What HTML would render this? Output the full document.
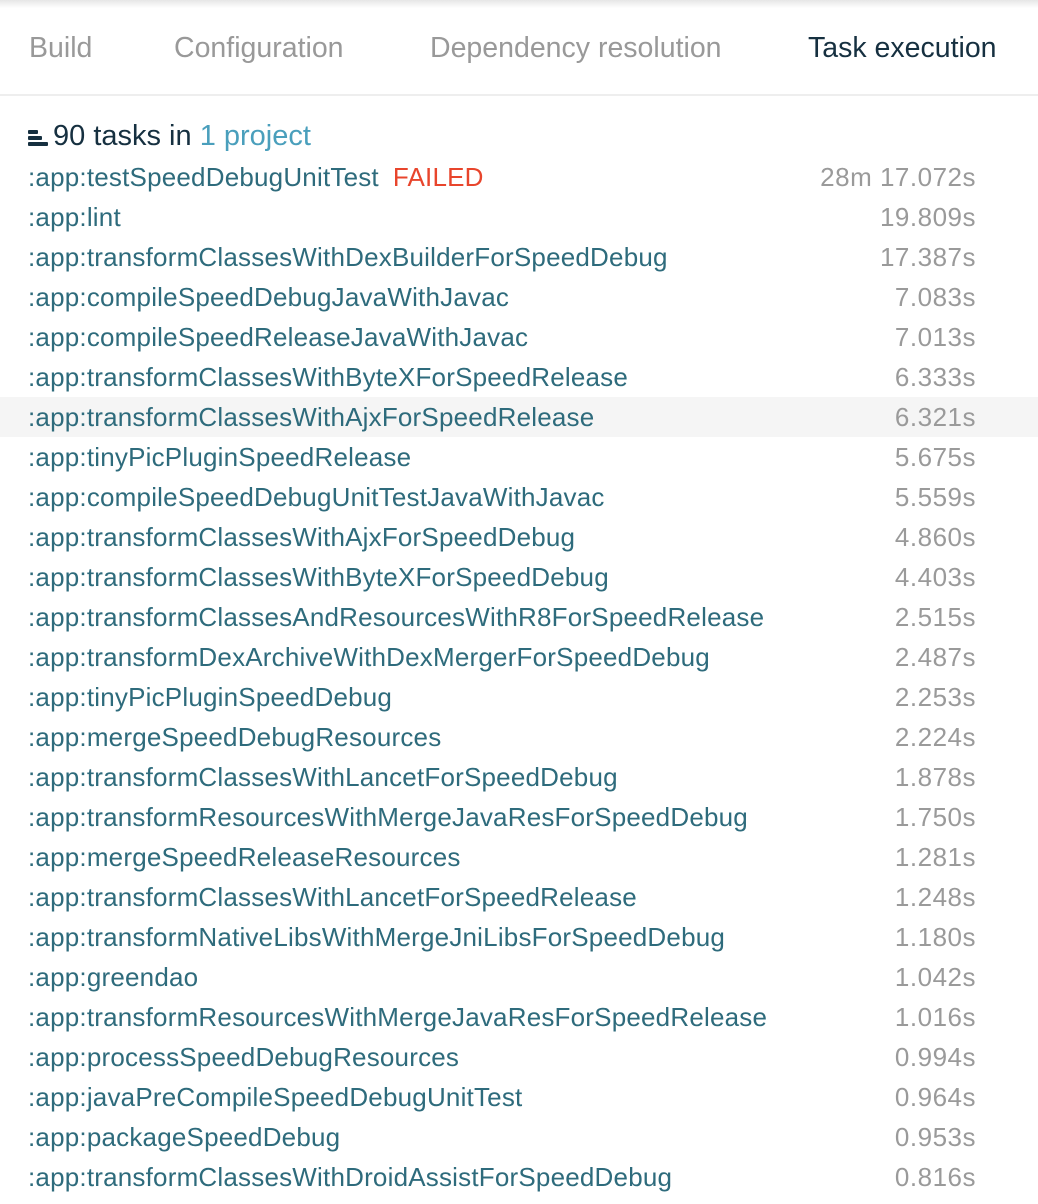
<!DOCTYPE html>
<html><head><meta charset="utf-8"><style>
*{margin:0;padding:0;box-sizing:border-box}
body{width:1038px;height:1204px;background:#fff;font-family:"Liberation Sans",sans-serif;position:relative;overflow:hidden}
.shadow{position:absolute;top:0;left:0;right:0;height:8px;background:linear-gradient(#e6e6e6,#fff)}
.tab{position:absolute;top:30px;font-size:28.5px;color:#999;white-space:nowrap;line-height:36px}
.div{position:absolute;top:94px;left:0;right:0;height:2px;background:#eeeeee}
.hdr{position:absolute;top:119px;left:28px;font-size:29px;color:#163040;line-height:34px;white-space:nowrap}
.hdr a{color:#4a9fbc;text-decoration:none}
.ic{display:inline-block;width:20px;height:18px;position:relative;vertical-align:-1px;margin-right:5px}
.ic i{position:absolute;left:0;height:3.5px;background:#163040;border-radius:1px}
.row{position:absolute;left:0;right:0;height:40px;line-height:40px;font-size:26px;white-space:nowrap;letter-spacing:0.2px}
.row .n{position:absolute;left:28px;color:#2e6b7c}
.row .t{position:absolute;right:62px;color:#9a9a9a;letter-spacing:0.5px}
.f{color:#e8452c;margin-left:14px}
.hl{background:#f5f5f5}
</style></head><body>
<div class="shadow"></div>
<div class="tab" style="left:29px">Build</div>
<div class="tab" style="left:174px">Configuration</div>
<div class="tab" style="left:430px">Dependency resolution</div>
<div class="tab" style="left:808px;color:#163040">Task execution</div>
<div class="div"></div>
<div class="hdr"><span class="ic"><i style="top:2px;width:10px"></i><i style="top:8px;width:14px"></i><i style="top:14px;width:20px"></i></span>90 tasks in <a>1 project</a></div>
<div class="row" style="top:157px"><span class="n">:app:testSpeedDebugUnitTest<span class="f">FAILED</span></span><span class="t">28m 17.072s</span></div>
<div class="row" style="top:197px"><span class="n">:app:lint</span><span class="t">19.809s</span></div>
<div class="row" style="top:237px"><span class="n">:app:transformClassesWithDexBuilderForSpeedDebug</span><span class="t">17.387s</span></div>
<div class="row" style="top:277px"><span class="n">:app:compileSpeedDebugJavaWithJavac</span><span class="t">7.083s</span></div>
<div class="row" style="top:317px"><span class="n">:app:compileSpeedReleaseJavaWithJavac</span><span class="t">7.013s</span></div>
<div class="row" style="top:357px"><span class="n">:app:transformClassesWithByteXForSpeedRelease</span><span class="t">6.333s</span></div>
<div class="row hl" style="top:397px"><span class="n">:app:transformClassesWithAjxForSpeedRelease</span><span class="t">6.321s</span></div>
<div class="row" style="top:437px"><span class="n">:app:tinyPicPluginSpeedRelease</span><span class="t">5.675s</span></div>
<div class="row" style="top:477px"><span class="n">:app:compileSpeedDebugUnitTestJavaWithJavac</span><span class="t">5.559s</span></div>
<div class="row" style="top:517px"><span class="n">:app:transformClassesWithAjxForSpeedDebug</span><span class="t">4.860s</span></div>
<div class="row" style="top:557px"><span class="n">:app:transformClassesWithByteXForSpeedDebug</span><span class="t">4.403s</span></div>
<div class="row" style="top:597px"><span class="n">:app:transformClassesAndResourcesWithR8ForSpeedRelease</span><span class="t">2.515s</span></div>
<div class="row" style="top:637px"><span class="n">:app:transformDexArchiveWithDexMergerForSpeedDebug</span><span class="t">2.487s</span></div>
<div class="row" style="top:677px"><span class="n">:app:tinyPicPluginSpeedDebug</span><span class="t">2.253s</span></div>
<div class="row" style="top:717px"><span class="n">:app:mergeSpeedDebugResources</span><span class="t">2.224s</span></div>
<div class="row" style="top:757px"><span class="n">:app:transformClassesWithLancetForSpeedDebug</span><span class="t">1.878s</span></div>
<div class="row" style="top:797px"><span class="n">:app:transformResourcesWithMergeJavaResForSpeedDebug</span><span class="t">1.750s</span></div>
<div class="row" style="top:837px"><span class="n">:app:mergeSpeedReleaseResources</span><span class="t">1.281s</span></div>
<div class="row" style="top:877px"><span class="n">:app:transformClassesWithLancetForSpeedRelease</span><span class="t">1.248s</span></div>
<div class="row" style="top:917px"><span class="n">:app:transformNativeLibsWithMergeJniLibsForSpeedDebug</span><span class="t">1.180s</span></div>
<div class="row" style="top:957px"><span class="n">:app:greendao</span><span class="t">1.042s</span></div>
<div class="row" style="top:997px"><span class="n">:app:transformResourcesWithMergeJavaResForSpeedRelease</span><span class="t">1.016s</span></div>
<div class="row" style="top:1037px"><span class="n">:app:processSpeedDebugResources</span><span class="t">0.994s</span></div>
<div class="row" style="top:1077px"><span class="n">:app:javaPreCompileSpeedDebugUnitTest</span><span class="t">0.964s</span></div>
<div class="row" style="top:1117px"><span class="n">:app:packageSpeedDebug</span><span class="t">0.953s</span></div>
<div class="row" style="top:1157px"><span class="n">:app:transformClassesWithDroidAssistForSpeedDebug</span><span class="t">0.816s</span></div>
</body></html>
